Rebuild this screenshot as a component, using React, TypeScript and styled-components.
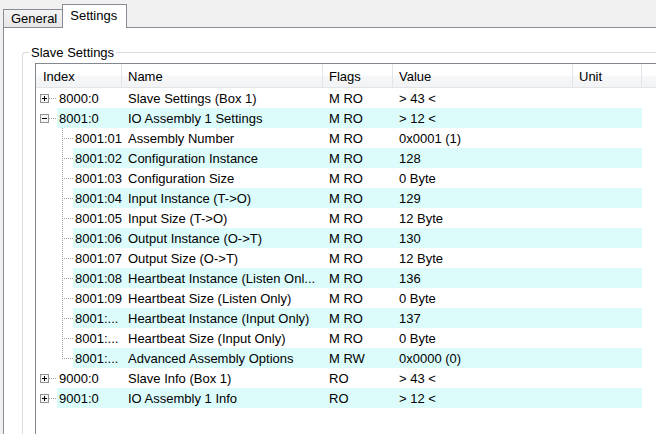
import React from "react";
import styled, { createGlobalStyle } from "styled-components";

const GlobalStyle = createGlobalStyle`
  html, body { margin: 0; padding: 0; background: #f0f0f0; }
  body { font-family: "Liberation Sans", Arial, sans-serif; font-size: 13px; color: #000; }
`;

type Row = {
  index: string;
  name: string;
  flags: string;
  value: string;
  level: 0 | 1;
  expander?: "+" | "-";
  last?: boolean;
};

const rows: Row[] = [
  { index: "8000:0", name: "Slave Settings (Box 1)", flags: "M RO", value: "> 43 <", level: 0, expander: "+" },
  { index: "8001:0", name: "IO Assembly 1 Settings", flags: "M RO", value: "> 12 <", level: 0, expander: "-" },
  { index: "8001:01", name: "Assembly Number", flags: "M RO", value: "0x0001 (1)", level: 1 },
  { index: "8001:02", name: "Configuration Instance", flags: "M RO", value: "128", level: 1 },
  { index: "8001:03", name: "Configuration Size", flags: "M RO", value: "0 Byte", level: 1 },
  { index: "8001:04", name: "Input Instance (T->O)", flags: "M RO", value: "129", level: 1 },
  { index: "8001:05", name: "Input Size (T->O)", flags: "M RO", value: "12 Byte", level: 1 },
  { index: "8001:06", name: "Output Instance (O->T)", flags: "M RO", value: "130", level: 1 },
  { index: "8001:07", name: "Output Size (O->T)", flags: "M RO", value: "12 Byte", level: 1 },
  { index: "8001:08", name: "Heartbeat Instance (Listen Onl...", flags: "M RO", value: "136", level: 1 },
  { index: "8001:09", name: "Heartbeat Size (Listen Only)", flags: "M RO", value: "0 Byte", level: 1 },
  { index: "8001:...", name: "Heartbeat Instance (Input Only)", flags: "M RO", value: "137", level: 1 },
  { index: "8001:...", name: "Heartbeat Size (Input Only)", flags: "M RO", value: "0 Byte", level: 1 },
  { index: "8001:...", name: "Advanced Assembly Options", flags: "M RW", value: "0x0000 (0)", level: 1, last: true },
  { index: "9000:0", name: "Slave Info (Box 1)", flags: "RO", value: "> 43 <", level: 0, expander: "+" },
  { index: "9001:0", name: "IO Assembly 1 Info", flags: "RO", value: "> 12 <", level: 0, expander: "+" },
];

const COLS = { index: 86, name: 201, flags: 70, value: 180, unit: 69 };

const Window = styled.div`
  width: 656px;
  height: 434px;
  overflow: hidden;
  display: flex;
  flex-direction: column;
  background: #f0f0f0;
`;

const TabStrip = styled.div`
  height: 27px;
  display: flex;
  align-items: flex-end;
  padding-left: 3px;
  position: relative;
  z-index: 1;
`;

const Tab = styled.div<{ $active?: boolean }>`
  box-sizing: border-box;
  display: flex;
  align-items: center;
  height: ${(p) => (p.$active ? 24 : 18)}px;
  margin-bottom: ${(p) => (p.$active ? -1 : 0)}px;
  padding: ${(p) => (p.$active ? "0 9px 2px 7px" : "0 5px 1px 7px")};
  border: 1px solid #898c95;
  border-bottom: none;
  ${(p) => (p.$active ? "" : "border-right: none;")}
  background: ${(p) => (p.$active ? "#ffffff" : "linear-gradient(#f2f2f2, #e6e6e6)")};
  font-size: 13px;
  white-space: nowrap;
`;

const Panel = styled.div`
  flex: 1;
  margin-left: 3px;
  background: #ffffff;
  border-top: 1px solid #898c95;
  border-left: 1px solid #898c95;
  padding: 24px 0 0 18px;
  display: flex;
  min-height: 0;
`;

const GroupBox = styled.div`
  position: relative;
  flex: 1;
  border-top: 1px solid #dcdcdc;
  border-left: 1px solid #dcdcdc;
  border-top-left-radius: 3px;
  padding: 10px 0 0 12px;
  display: flex;
  min-height: 0;
`;

const GroupCaption = styled.span`
  position: absolute;
  top: -8px;
  left: 6px;
  padding: 0 2px;
  background: #ffffff;
  font-size: 13px;
  line-height: 16px;
`;

const ListView = styled.div`
  width: 700px;
  flex-shrink: 0;
  border-top: 1px solid #828790;
  border-left: 1px solid #828790;
  background: #ffffff;
`;

const Header = styled.div`
  display: flex;
  height: 23px;
  border-bottom: 1px solid #e2e4e7;
  background: linear-gradient(#ffffff 0%, #ffffff 45%, #f6f7f8 55%, #f2f3f5 100%);
`;

const HeaderCell = styled.div<{ $w?: number; $pad?: number }>`
  box-sizing: border-box;
  ${(p) => (p.$w ? `width: ${p.$w}px;` : "flex: 1;")}
  flex-shrink: 0;
  display: flex;
  align-items: center;
  padding: 1px 0 0 ${(p) => p.$pad ?? 6}px;
  border-right: 1px solid #e3e5e8;
  font-size: 13px;
  white-space: nowrap;
`;

const RowLine = styled.div`
  display: flex;
  height: 20px;
`;

const Gutter = styled.div<{ $w: number }>`
  width: ${(p) => p.$w}px;
  flex-shrink: 0;
  height: 20px;
  svg {
    display: block;
  }
`;

const RowBody = styled.div<{ $alt: boolean }>`
  display: flex;
  height: 20px;
  background: ${(p) => (p.$alt ? "#dcfcfc" : "transparent")};
`;

const Cell = styled.div<{ $w: number; $pad?: number }>`
  box-sizing: border-box;
  width: ${(p) => p.$w}px;
  height: 20px;
  flex-shrink: 0;
  padding: 1px 0 0 ${(p) => p.$pad ?? 6}px;
  font-size: 13px;
  line-height: 19px;
  white-space: nowrap;
  overflow: hidden;
`;

const DOT = "#a0a0a0";

function Expander({ sign }: { sign: "+" | "-" }) {
  return (
    <svg width="21" height="20" viewBox="0 0 21 20">
      <rect x="4.5" y="6.5" width="8" height="8" fill="#f6f6f6" stroke="#919191" />
      <line x1="6" y1="10.5" x2="11" y2="10.5" stroke="#000" />
      {sign === "+" && <line x1="8.5" y1="8" x2="8.5" y2="13" stroke="#000" />}
      <line x1="13" y1="10.5" x2="21" y2="10.5" stroke={DOT} strokeDasharray="1 1" />
    </svg>
  );
}

function ChildLines({ last }: { last?: boolean }) {
  return (
    <svg width="37" height="20" viewBox="0 0 37 20">
      <line x1="26.5" y1="0" x2="26.5" y2={last ? 11 : 20} stroke={DOT} strokeDasharray="1 1" />
      <line x1="28" y1="10.5" x2="37" y2="10.5" stroke={DOT} strokeDasharray="1 1" />
    </svg>
  );
}

export default function App() {
  return (
    <>
      <GlobalStyle />
      <Window>
        <TabStrip>
          <Tab>General</Tab>
          <Tab $active>Settings</Tab>
        </TabStrip>
        <Panel>
          <GroupBox>
            <GroupCaption>Slave Settings</GroupCaption>
            <ListView>
              <Header>
                <HeaderCell $w={COLS.index} $pad={7}>Index</HeaderCell>
                <HeaderCell $w={COLS.name}>Name</HeaderCell>
                <HeaderCell $w={COLS.flags}>Flags</HeaderCell>
                <HeaderCell $w={COLS.value}>Value</HeaderCell>
                <HeaderCell $w={COLS.unit}>Unit</HeaderCell>
                <HeaderCell />
              </Header>
              {rows.map((r, i) => {
                const gw = r.level === 0 ? 21 : 37;
                return (
                  <RowLine key={i}>
                    <Gutter $w={gw}>
                      {r.level === 0 ? <Expander sign={r.expander ?? "+"} /> : <ChildLines last={r.last} />}
                    </Gutter>
                    <RowBody $alt={i % 2 === 1}>
                      <Cell $w={COLS.index - gw} $pad={2}>{r.index}</Cell>
                      <Cell $w={COLS.name}>{r.name}</Cell>
                      <Cell $w={COLS.flags}>{r.flags}</Cell>
                      <Cell $w={COLS.value}>{r.value}</Cell>
                      <Cell $w={COLS.unit}></Cell>
                    </RowBody>
                  </RowLine>
                );
              })}
            </ListView>
          </GroupBox>
        </Panel>
      </Window>
    </>
  );
}
